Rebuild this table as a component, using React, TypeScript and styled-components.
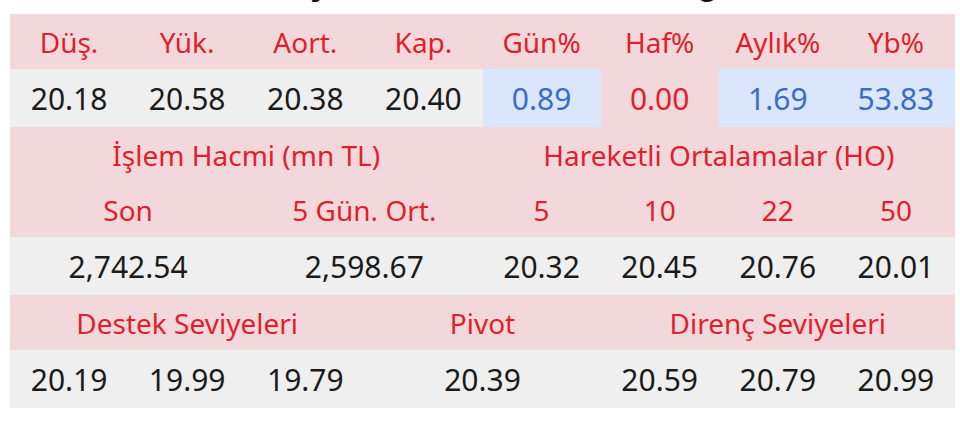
import React from "react";
import styled, { createGlobalStyle } from "styled-components";

const GlobalStyle = createGlobalStyle`
  html, body {
    margin: 0;
    padding: 0;
    background: #ffffff;
  }
  body {
    font-family: "Noto Sans", "Open Sans", sans-serif;
  }
`;

const Page = styled.div`
  width: 960px;
  height: 424px;
  overflow: hidden;
  background: #ffffff;
`;

// title above the table, only its descenders show in the picture
const TitleClip = styled.div`
  height: 14px;
  overflow: hidden;
`;

const Title = styled.h2`
  margin: -37px 0 0 0;
  padding-left: 280px;
  font-family: "Liberation Sans", Arial, sans-serif;
  font-size: 34px;
  font-weight: 700;
  line-height: 40px;
  color: #111111;
  white-space: nowrap;
`;

const Table = styled.table`
  margin-left: 10px;
  width: 945px;
  table-layout: fixed;
  border-collapse: collapse;
  border-spacing: 0;
`;

const HeadRow = styled.tr`
  height: 55px;
  background: #f2d8db;
`;

const ValueRow = styled.tr`
  height: 58px;
  background: #efefef;
`;

const Th = styled.th`
  padding: 0;
  font-weight: 400;
  font-size: 28px;
  color: #e01f2d;
  text-align: center;
  vertical-align: middle;
  white-space: nowrap;
`;

type Tone = "plain" | "up" | "down";

const Td = styled.td<{ $tone?: Tone }>`
  padding: 0;
  font-size: 30px;
  text-align: center;
  vertical-align: middle;
  white-space: nowrap;
  color: ${(p) =>
    p.$tone === "up" ? "#3e6cc4" : p.$tone === "down" ? "#e01f2d" : "#1b1b1b"};
  background: ${(p) =>
    p.$tone === "up" ? "#d9e6fb" : p.$tone === "down" ? "#f2d8db" : "transparent"};
`;

const priceHeads = ["Düş.", "Yük.", "Aort.", "Kap.", "Gün%", "Haf%", "Aylık%", "Yb%"];
const prices: { v: string; tone: Tone }[] = [
  { v: "20.18", tone: "plain" },
  { v: "20.58", tone: "plain" },
  { v: "20.38", tone: "plain" },
  { v: "20.40", tone: "plain" },
  { v: "0.89", tone: "up" },
  { v: "0.00", tone: "down" },
  { v: "1.69", tone: "up" },
  { v: "53.83", tone: "up" },
];

const App = () => {
  return (
    <Page>
      <GlobalStyle />
      <TitleClip>
        <Title>Fiyat Verileri ve Teknik Bilgiler</Title>
      </TitleClip>
      <Table>
        <colgroup>
          {priceHeads.map((h) => (
            <col key={h} />
          ))}
        </colgroup>
        <tbody>
          <HeadRow>
            {priceHeads.map((h) => (
              <Th key={h}>{h}</Th>
            ))}
          </HeadRow>
          <ValueRow>
            {prices.map((p, i) => (
              <Td key={i} $tone={p.tone}>
                {p.v}
              </Td>
            ))}
          </ValueRow>

          <HeadRow>
            <Th colSpan={4}>İşlem Hacmi (mn TL)</Th>
            <Th colSpan={4}>Hareketli Ortalamalar (HO)</Th>
          </HeadRow>
          <HeadRow>
            <Th colSpan={2}>Son</Th>
            <Th colSpan={2}>5 Gün. Ort.</Th>
            <Th>5</Th>
            <Th>10</Th>
            <Th>22</Th>
            <Th>50</Th>
          </HeadRow>
          <ValueRow>
            <Td colSpan={2}>2,742.54</Td>
            <Td colSpan={2}>2,598.67</Td>
            <Td>20.32</Td>
            <Td>20.45</Td>
            <Td>20.76</Td>
            <Td>20.01</Td>
          </ValueRow>

          <HeadRow>
            <Th colSpan={3}>Destek Seviyeleri</Th>
            <Th colSpan={2}>Pivot</Th>
            <Th colSpan={3}>Direnç Seviyeleri</Th>
          </HeadRow>
          <ValueRow>
            <Td>20.19</Td>
            <Td>19.99</Td>
            <Td>19.79</Td>
            <Td colSpan={2}>20.39</Td>
            <Td>20.59</Td>
            <Td>20.79</Td>
            <Td>20.99</Td>
          </ValueRow>
        </tbody>
      </Table>
    </Page>
  );
};

export default App;
